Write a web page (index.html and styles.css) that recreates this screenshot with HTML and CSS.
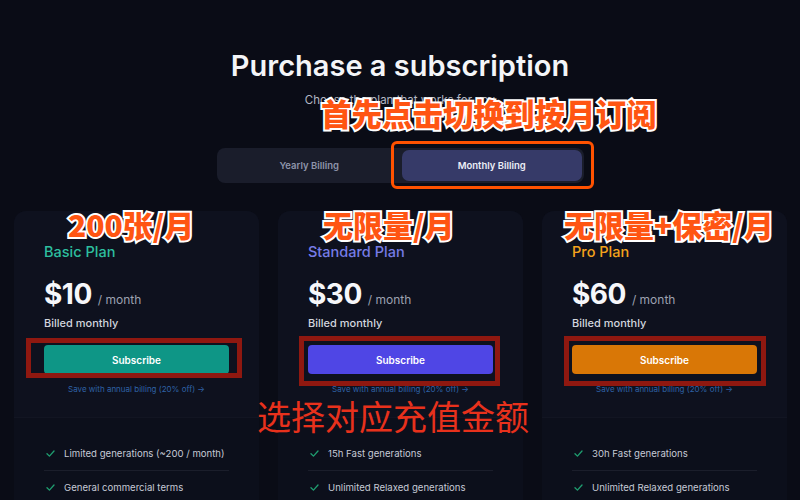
FILE: index.html
```html
<!DOCTYPE html>
<html>
<head>
<meta charset="utf-8">
<link rel="stylesheet" href="styles.css">
</head>
<body>
<main class="page">
  <header class="head">
    <h1 class="title">Purchase a subscription</h1>
    <p class="subtitle">Choose the plan that works for you</p>
    <div class="toggle">
      <button class="tab">Yearly Billing</button>
      <button class="tab active">Monthly Billing</button>
    </div>
  </header>

  <section class="cards">
    <article class="card">
      <div class="card-top">
        <h2 class="plan plan-basic">Basic Plan</h2>
        <div class="price"><span class="amount">$10</span><span class="per">/ month</span></div>
        <div class="billed">Billed monthly</div>
        <button class="sub sub-basic">Subscribe</button>
        <div class="save">Save with annual billing (20% off) →</div>
      </div>
      <ul class="features">
        <li><svg class="check" viewBox="0 0 10 8"><path d="M1 4.2 L3.8 7 L9 1.2"/></svg>Limited generations (~200 / month)</li>
        <li><svg class="check" viewBox="0 0 10 8"><path d="M1 4.2 L3.8 7 L9 1.2"/></svg>General commercial terms</li>
      </ul>
    </article>

    <article class="card">
      <div class="card-top">
        <h2 class="plan plan-std">Standard Plan</h2>
        <div class="price"><span class="amount">$30</span><span class="per">/ month</span></div>
        <div class="billed">Billed monthly</div>
        <button class="sub sub-std">Subscribe</button>
        <div class="save">Save with annual billing (20% off) →</div>
      </div>
      <ul class="features">
        <li><svg class="check" viewBox="0 0 10 8"><path d="M1 4.2 L3.8 7 L9 1.2"/></svg>15h Fast generations</li>
        <li><svg class="check" viewBox="0 0 10 8"><path d="M1 4.2 L3.8 7 L9 1.2"/></svg>Unlimited Relaxed generations</li>
      </ul>
    </article>

    <article class="card">
      <div class="card-top">
        <h2 class="plan plan-pro">Pro Plan</h2>
        <div class="price"><span class="amount">$60</span><span class="per">/ month</span></div>
        <div class="billed">Billed monthly</div>
        <button class="sub sub-pro">Subscribe</button>
        <div class="save">Save with annual billing (20% off) →</div>
      </div>
      <ul class="features">
        <li><svg class="check" viewBox="0 0 10 8"><path d="M1 4.2 L3.8 7 L9 1.2"/></svg>30h Fast generations</li>
        <li><svg class="check" viewBox="0 0 10 8"><path d="M1 4.2 L3.8 7 L9 1.2"/></svg>Unlimited Relaxed generations</li>
      </ul>
    </article>
  </section>

  <!-- annotation overlay -->
  <div class="note note-top">首先点击切换到按月订阅</div>
  <div class="ring-toggle"></div>
  <div class="note note-1">200张/月</div>
  <div class="note note-2">无限量/月</div>
  <div class="note note-3">无限量+保密/月</div>
  <div class="box box-1"></div>
  <div class="box box-2"></div>
  <div class="box box-3"></div>
  <div class="hint">选择对应充值金额</div>
</main>
</body>
</html>
```

FILE: styles.css
```css
* { box-sizing: border-box; }
html, body { margin: 0; padding: 0; }
body {
  background: #0a0c16;
  font-family: Inter, "Liberation Sans", sans-serif;
  color: #fff;
  width: 800px;
  height: 500px;
  overflow: hidden;
}
.page { position: relative; width: 800px; height: 500px; overflow: hidden; }

.head { display: flex; flex-direction: column; align-items: center; padding-top: 49px; }
.title {
  margin: 0;
  font-size: 29px;
  font-weight: 600;
  line-height: 34px;
  letter-spacing: 0;
  color: #f4f5f8;
}
.subtitle {
  margin: 10px 0 0;
  font-size: 11.5px;
  line-height: 14px;
  color: #b4b8c4;
}
.toggle {
  margin-top: 41px;
  width: 367px;
  height: 35px;
  background: #1a1d2b;
  border-radius: 8px;
  padding: 2px;
  display: grid;
  grid-template-columns: 1fr 1fr;
}
.tab {
  border: 0;
  background: transparent;
  font-family: inherit;
  font-size: 9.5px;
  font-weight: 600;
  color: #8e94aa;
  border-radius: 7px;
}
.tab.active { background: #363a68; color: #eceef6; margin-left: 2px; }

.cards {
  display: grid;
  grid-template-columns: repeat(3, 1fr);
  gap: 19px;
  padding: 0 13px 0 14px;
  margin-top: 28px;
}
.card {
  background: #0c0f1b;
  border-radius: 12px 12px 0 0;
  height: 289px;
  overflow: hidden;
}
.card-top {
  background: #0e111e;
  padding: 32px 30px 23px;
  border-bottom: 1px solid #121522;
}
.plan { margin: 0; font-size: 14.5px; font-weight: 500; line-height: 18px; }
.plan-basic { color: #2dbf9f; }
.plan-std { color: #767ce6; }
.plan-pro { color: #f3a31c; }
.price { margin-top: 16px; display: flex; align-items: baseline; height: 34px; line-height: 34px; }
.amount { font-size: 28px; font-weight: 700; color: #f6f7fa; letter-spacing: -0.5px; }
.per { margin-left: 6px; font-size: 12px; color: #9da1b1; }
.billed { margin-top: 4px; font-size: 11px; font-weight: 500; line-height: 16px; color: #d2d5de; }
.sub {
  display: block;
  width: 100%;
  margin-top: 14px;
  height: 29px;
  border: 0;
  border-radius: 4px;
  font-family: inherit;
  font-size: 10px;
  font-weight: 600;
  color: #fff;
}
.sub-basic { background: #0e9686; }
.sub-std { background: #4f46e5; }
.sub-pro { background: #d97706; }
.save {
  margin-top: 10px;
  text-align: center;
  font-size: 8px;
  line-height: 10px;
  color: #2f62a6;
}
.features { list-style: none; margin: 0; padding: 19px 30px 0; }
.features li {
  height: 34px;
  display: flex;
  align-items: center;
  font-size: 9.6px;
  white-space: nowrap;
  color: #c6cad6;
  border-bottom: 1px solid #1b1e2b;
}
.check {
  flex: none;
  width: 9px;
  height: 7px;
  margin: 0 9px 0 2px;
  fill: none;
  stroke: #1f9e70;
  stroke-width: 1.5;
  stroke-linecap: round;
  stroke-linejoin: round;
}

/* annotations drawn over the screenshot */
.note {
  position: absolute;
  font-family: "Noto Sans CJK SC", sans-serif;
  font-weight: 900;
  font-size: 30px;
  line-height: 1;
  color: #ff5512;
  -webkit-text-stroke: 4px #ffffff;
  paint-order: stroke fill;
  white-space: nowrap;
}
.note-top { left: 321px; top: 98px; font-size: 30.5px; }
.note-1 { left: 68px; top: 209px; }
.note-2 { left: 323px; top: 209px; }
.note-3 { left: 564px; top: 209px; }
.ring-toggle {
  position: absolute;
  left: 391px; top: 141px;
  width: 203px; height: 48px;
  border: 3px solid #ff5200;
  border-radius: 6px;
}
.box {
  position: absolute;
  border: 5px solid #8f1810;
}
.box-1 { left: 26px; top: 338px; width: 216px; height: 40px; }
.box-2 { left: 299px; top: 336px; width: 201px; height: 50px; }
.box-3 { left: 564px; top: 336px; width: 202px; height: 50px; }
.hint {
  position: absolute;
  left: 257px; top: 396px;
  font-family: "Noto Sans CJK SC", sans-serif;
  font-weight: 400;
  font-size: 34px;
  line-height: 1.2;
  color: #e8311c;
  white-space: nowrap;
}
```
